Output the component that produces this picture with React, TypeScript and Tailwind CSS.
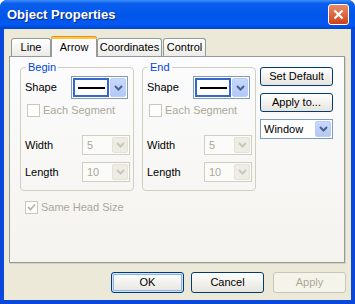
import React from 'react'

function Chevron({ color }: { color: string }) {
  return (
    <svg width="9" height="6" viewBox="0 0 9 6">
      <polyline points="1,1 4.5,4.5 8,1" fill="none" stroke={color} strokeWidth="2" />
    </svg>
  )
}

function DropButton({ disabled }: { disabled?: boolean }) {
  return (
    <div
      className={
        disabled
          ? 'w-[16px] h-full flex items-center justify-center rounded-[2px] bg-[#EEEDE5] border border-[#E5E3D8]'
          : 'w-[16px] h-full flex items-center justify-center rounded-[2px] bg-linear-to-b from-[#C8D8FD] to-[#B2C8F6] border border-[#BACCF7]'
      }
    >
      <Chevron color={disabled ? '#C9C7BA' : '#4D6185'} />
    </div>
  )
}

function ShapeCombo() {
  return (
    <div className="w-[57px] h-[23px] border border-[#7F9DB9] bg-white p-[1px] flex gap-[1px]">
      <div className="flex-1 border-2 border-[#3567C8] flex items-center justify-center">
        <div className="w-[27px] h-[2px] bg-black" />
      </div>
      <DropButton />
    </div>
  )
}

function DisabledCombo({ value }: { value: string }) {
  return (
    <div className="w-[48px] h-[20px] border border-[#D0CEC1] bg-[#FBFBF9] p-[1px] flex">
      <div className="flex-1 pl-[3px] text-[11px] leading-[16px] text-[#ACA899]">{value}</div>
      <DropButton disabled />
    </div>
  )
}

function CheckBox({ checked }: { checked?: boolean }) {
  return (
    <div className="w-[13px] h-[13px] border border-[#CAC8BB] bg-white flex items-center justify-center">
      {checked && (
        <svg width="9" height="9" viewBox="0 0 9 9">
          <polyline points="1,4 3.5,6.5 8,1.5" fill="none" stroke="#B8B5A6" strokeWidth="1.8" />
        </svg>
      )}
    </div>
  )
}

function Group({ title }: { title: string }) {
  return (
    <fieldset className="w-[114px] border border-[#D0D0BF] rounded-[4px] pb-[8px]">
      <legend className="ml-[5px] px-[2px] text-[11px] leading-[13px] text-[#0046D5]">{title}</legend>
      <div className="mt-[2px] h-[23px] flex items-center">
        <span className="pl-[4px] w-[50px] text-[11px]">Shape</span>
        <ShapeCombo />
      </div>
      <div className="mt-[5px] pl-[6px] flex items-center gap-[3px]">
        <CheckBox />
        <span className="text-[11px] leading-[13px] text-[#ACA899]">Each Segment</span>
      </div>
      <div className="mt-[18px] h-[20px] flex items-center">
        <span className="pl-[4px] w-[61px] text-[11px]">Width</span>
        <DisabledCombo value="5" />
      </div>
      <div className="mt-[7px] h-[20px] flex items-center">
        <span className="pl-[4px] w-[61px] text-[11px]">Length</span>
        <DisabledCombo value="10" />
      </div>
    </fieldset>
  )
}

function XPButton({ label, def, disabled, className }: { label: string; def?: boolean; disabled?: boolean; className?: string }) {
  const base = 'flex items-center justify-center text-[11px] rounded-[3px] border '
  const look = disabled
    ? 'border-[#C9C7BA] bg-[#F5F4EA] text-[#ACA899]'
    : def
    ? 'border-[#003C74] bg-linear-to-b from-white to-[#E6E4DC] shadow-[inset_0_0_0_1px_#CEE3FC,inset_0_0_0_2px_#8FB2EA]'
    : 'border-[#003C74] bg-linear-to-b from-white to-[#E6E4DC]'
  return <div className={base + look + ' ' + (className ?? '')}>{label}</div>
}

export default function App() {
  return (
    <div className="w-[355px] h-[304px] bg-[#0A48DC] rounded-t-[7px] flex flex-col font-['Liberation_Sans',Arial,sans-serif] text-black select-none">
      {/* title bar */}
      <div className="h-[29px] rounded-t-[7px] bg-[linear-gradient(to_bottom,#3D8DF8_0%,#0B5FEE_12%,#0055EA_55%,#0259F2_85%,#0043CC_100%)] flex items-center pl-[7px] pr-[6px]">
        <span className="text-white text-[13px] font-bold [text-shadow:1px_1px_0_#0A2A8A]">Object Properties</span>
        <div className="ml-auto w-[21px] h-[21px] rounded-[3px] border border-white bg-linear-to-b from-[#E88A68] to-[#CF3F12] flex items-center justify-center">
          <svg width="11" height="11" viewBox="0 0 11 11">
            <path d="M1.5 1.5 L9.5 9.5 M9.5 1.5 L1.5 9.5" stroke="white" strokeWidth="2.2" />
          </svg>
        </div>
      </div>

      {/* client */}
      <div className="flex-1 mx-[4px] mb-[4px] bg-[#ECE9D8] flex flex-col">
        {/* tabs */}
        <div className="h-[27px] pl-[7px] flex items-end text-[11px]">
          <div className="w-[40px] h-[18px] border border-b-0 border-[#919B9C] rounded-t-[3px] bg-linear-to-b from-white to-[#ECEBE6] flex items-center justify-center">Line</div>
          <div className="relative z-10 -mb-[1px] w-[46px] h-[21px] border-x border-[#919B9C] rounded-t-[3px] bg-[#FCFCFE] flex flex-col">
            <div className="h-[3px] -mx-[1px] rounded-t-[3px] bg-[#FFC83C] border-t border-[#E68B2C]" />
            <div className="flex-1 flex items-center justify-center pb-[2px]">Arrow</div>
          </div>
          <div className="w-[65px] h-[18px] border border-b-0 border-[#919B9C] rounded-t-[3px] bg-linear-to-b from-white to-[#ECEBE6] flex items-center justify-center">Coordinates</div>
          <div className="ml-[1px] w-[43px] h-[18px] border border-b-0 border-[#919B9C] rounded-t-[3px] bg-linear-to-b from-white to-[#ECEBE6] flex items-center justify-center">Control</div>
        </div>

        {/* panel */}
        <div className="ml-[5px] w-[336px] h-[207px] border border-[#919B9C] bg-linear-to-b from-[#FCFCFE] to-[#F4F3EE] shadow-[1px_1px_0_#D6D3C6] pl-[10px]">
          <div className="mt-[4px] flex items-start">
            <Group title="Begin" />
            <div className="ml-[8px]">
              <Group title="End" />
            </div>
            <div className="ml-[4px] mt-[6px] w-[73px] flex flex-col">
              <XPButton label="Set Default" className="h-[19px]" />
              <XPButton label="Apply to..." className="h-[19px] mt-[7px]" />
              <div className="mt-[7px] h-[20px] border border-[#7F9DB9] bg-white p-[1px] flex">
                <div className="flex-1 pl-[2px] text-[11px] leading-[16px]">Window</div>
                <DropButton />
              </div>
            </div>
          </div>
          <div className="mt-[10px] pl-[5px] flex items-center gap-[3px]">
            <CheckBox checked />
            <span className="text-[11px] leading-[13px] text-[#ACA899]">Same Head Size</span>
          </div>
        </div>

        {/* buttons */}
        <div className="mt-[9px] flex">
          <XPButton label="OK" def className="ml-[107px] w-[73px] h-[21px]" />
          <XPButton label="Cancel" className="ml-[7px] w-[73px] h-[21px]" />
          <XPButton label="Apply" disabled className="ml-[9px] w-[73px] h-[21px]" />
        </div>
      </div>
    </div>
  )
}
